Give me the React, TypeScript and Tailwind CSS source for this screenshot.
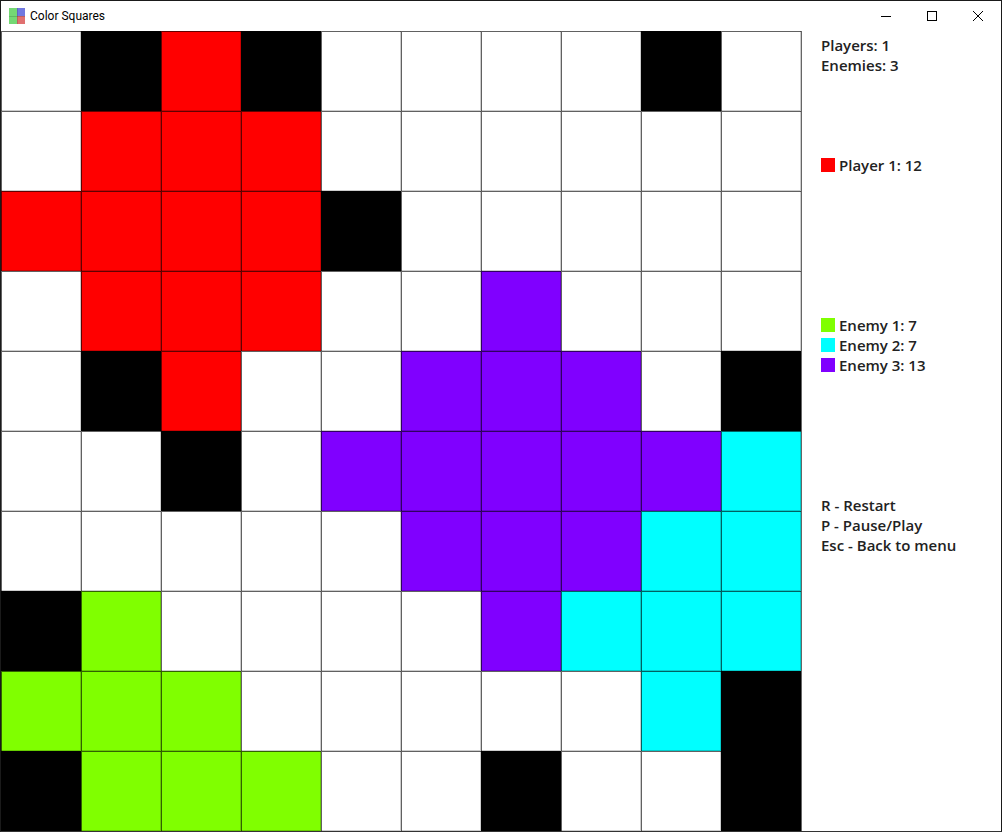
import React from 'react';

const W = 'bg-white';
const K = 'bg-black';
const R = 'bg-[#ff0000]';
const G = 'bg-[#80ff00]';
const C = 'bg-[#00ffff]';
const V = 'bg-[#8000ff]';

const board = [
  [W, K, R, K, W, W, W, W, K, W],
  [W, R, R, R, W, W, W, W, W, W],
  [R, R, R, R, K, W, W, W, W, W],
  [W, R, R, R, W, W, V, W, W, W],
  [W, K, R, W, W, V, V, V, W, K],
  [W, W, K, W, V, V, V, V, V, C],
  [W, W, W, W, W, V, V, V, C, C],
  [K, G, W, W, W, W, V, C, C, C],
  [G, G, G, W, W, W, W, W, C, K],
  [K, G, G, G, W, W, K, W, W, K],
];

const Legend = ({ color, label }: { color: string; label: string }) => (
  <div className="flex items-center h-5">
    <div className={`w-[14px] h-[14px] mr-1 ${color}`} />
    <span>{label}</span>
  </div>
);

export default function App() {
  return (
    <div className="w-[1002px] h-[832px] bg-white border border-[#1a1a1a] border-b-[#333333] flex flex-col overflow-hidden font-['Open_Sans','Noto_Sans',sans-serif]">
      {/* title bar */}
      <div className="h-[30px] shrink-0 flex items-center bg-white">
        <svg width="16" height="16" viewBox="0 0 16 16" className="ml-[8px]">
          <rect x="0" y="0" width="8" height="8" fill="#74d874" />
          <rect x="8" y="0" width="8" height="8" fill="#7078e0" />
          <rect x="0" y="8" width="8" height="8" fill="#74d874" />
          <rect x="8" y="8" width="8" height="8" fill="#e07070" />
          <path d="M0 8.5H16M8.5 0V16" stroke="#000" strokeOpacity="0.15" />
        </svg>
        <span className="ml-[5px] text-[12px] text-black font-['Roboto','Noto_Sans',sans-serif]">Color Squares</span>
        <div className="ml-auto flex h-full">
          <div className="w-[46px] flex items-center justify-center">
            <svg width="10" height="10" viewBox="0 0 10 10"><path d="M0 5.5H10" stroke="#000" /></svg>
          </div>
          <div className="w-[46px] flex items-center justify-center">
            <svg width="10" height="10" viewBox="0 0 10 10"><rect x="0.5" y="0.5" width="9" height="9" fill="none" stroke="#000" /></svg>
          </div>
          <div className="w-[46px] flex items-center justify-center">
            <svg width="10" height="10" viewBox="0 0 10 10"><path d="M0 0L10 10M10 0L0 10" stroke="#000" /></svg>
          </div>
        </div>
      </div>

      <div className="flex flex-1 min-h-0">
        {/* board */}
        <div className="grid grid-cols-[repeat(10,80px)] grid-rows-[repeat(10,80px)] w-[800px] h-[800px] shrink-0">
          {board.flat().map((cell, i) => (
            <div key={i} className={`${cell} shadow-[inset_1px_1px_0_rgba(0,0,0,0.62),inset_-1px_-1px_0_rgba(0,0,0,0.2)]`} />
          ))}
        </div>

        {/* side panel */}
        <div className="flex-1 pl-[19px] text-[15px] leading-5 font-semibold text-[#222222] border-l border-black/60">
          <div className="pt-[4px] h-[110px]">
            <div>Players: 1</div>
            <div>Enemies: 3</div>
          </div>
          <div className="pt-[14px] h-[160px]">
            <Legend color="bg-[#ff0000]" label="Player 1: 12" />
          </div>
          <div className="pt-[14px] h-[180px]">
            <Legend color="bg-[#80ff00]" label="Enemy 1: 7" />
            <Legend color="bg-[#00ffff]" label="Enemy 2: 7" />
            <Legend color="bg-[#8000ff]" label="Enemy 3: 13" />
          </div>
          <div className="pt-[14px]">
            <div>R - Restart</div>
            <div>P - Pause/Play</div>
            <div>Esc - Back to menu</div>
          </div>
        </div>
      </div>
    </div>
  );
}
